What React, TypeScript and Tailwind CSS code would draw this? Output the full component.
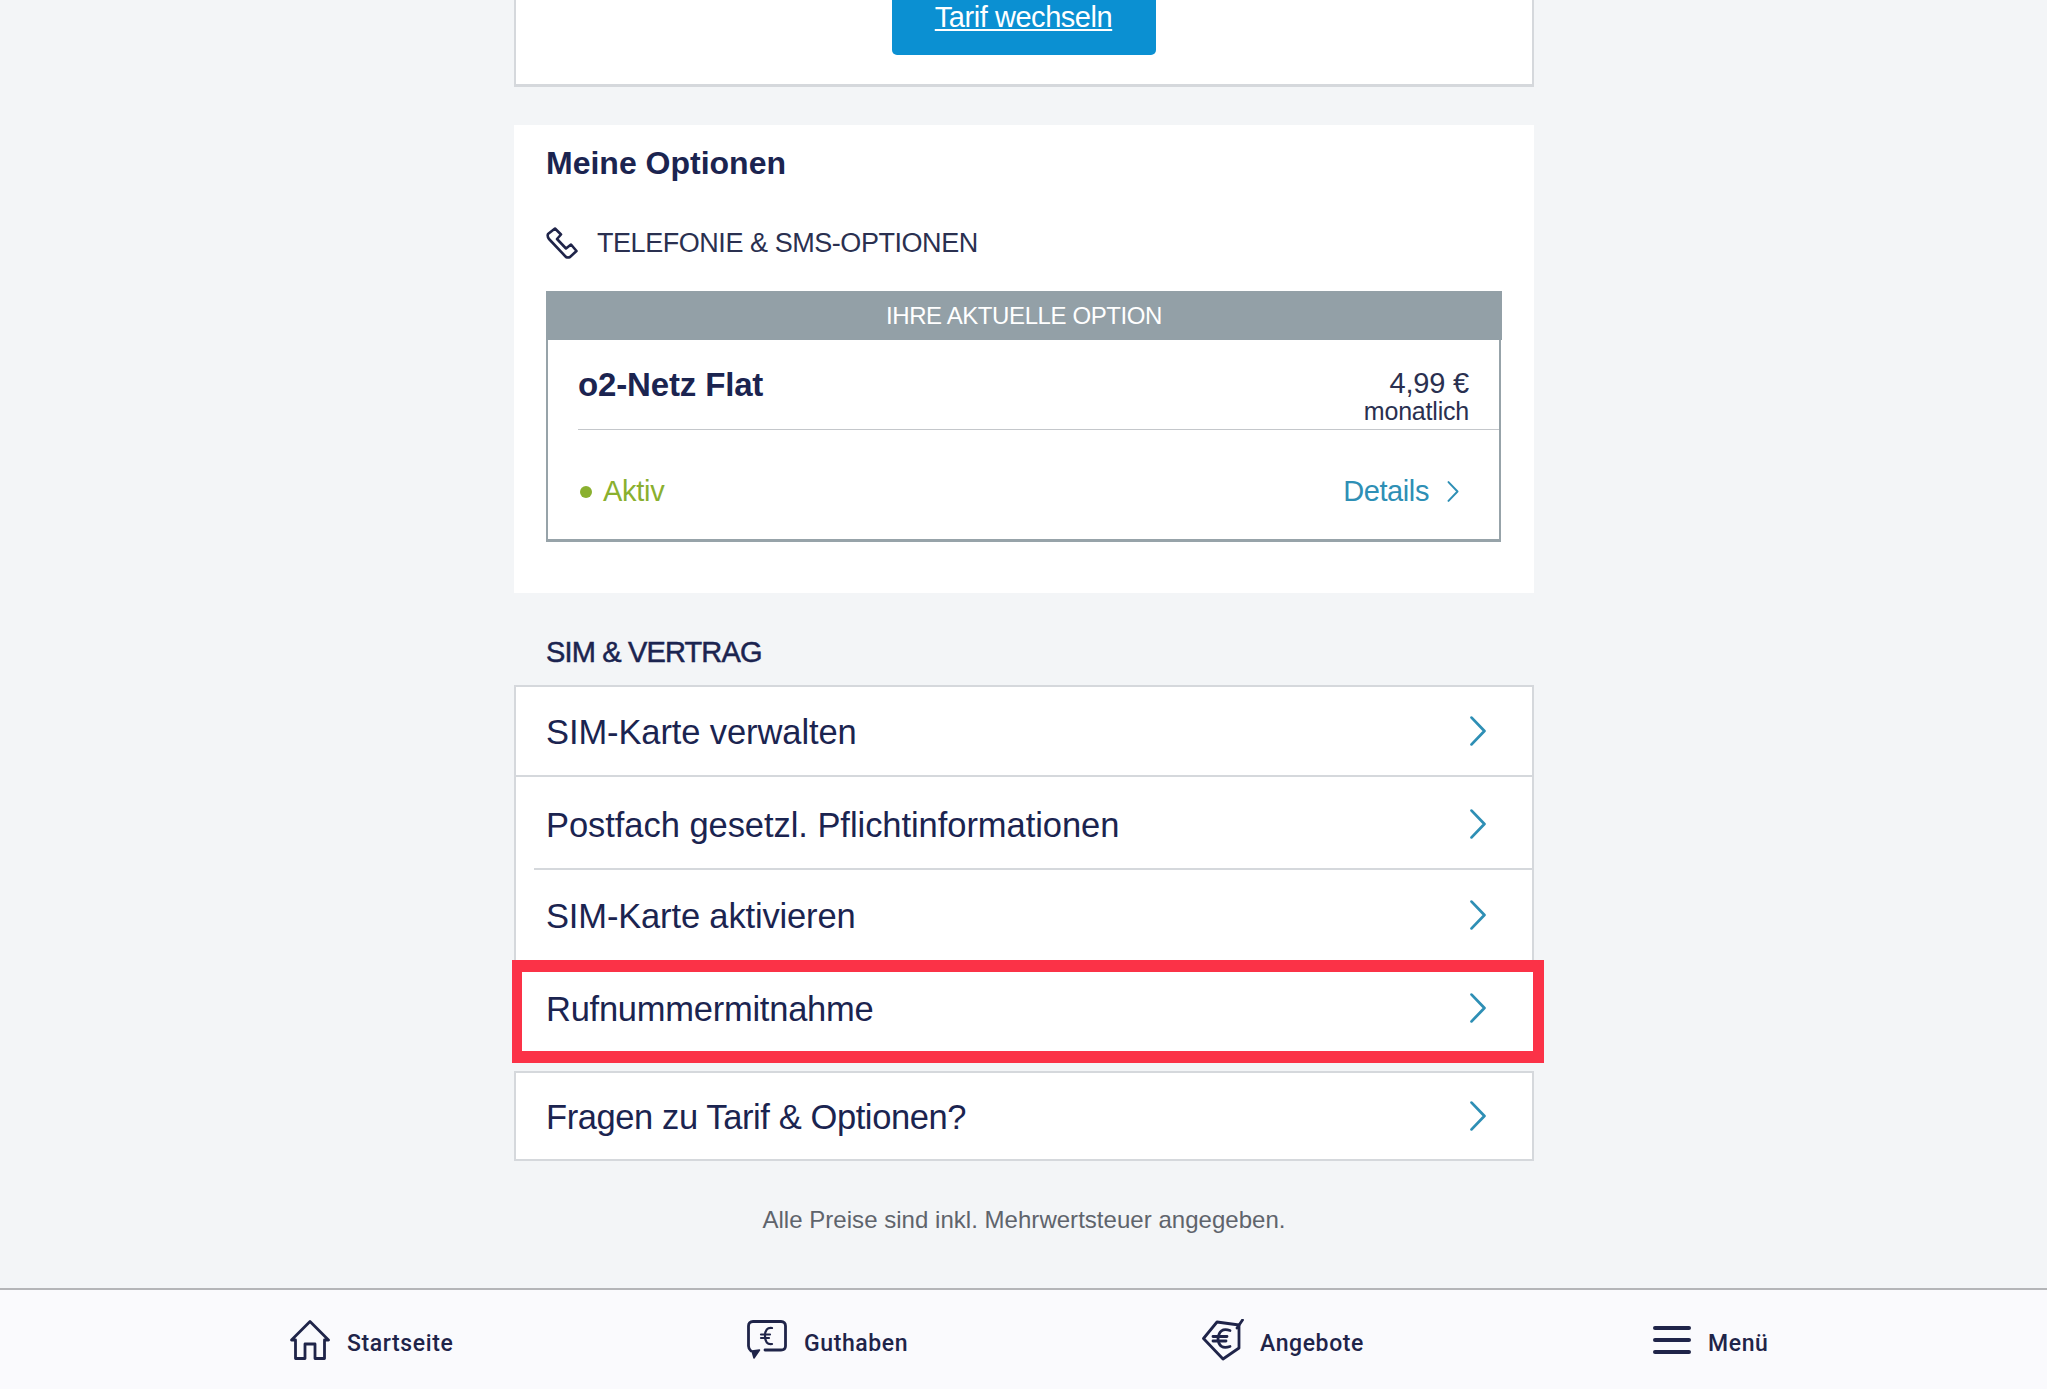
import React from "react";

const Chevron = ({ className }: { className: string }) => (
  <svg viewBox="0 0 16 28" fill="none" stroke="#2e8fb5" strokeWidth="2.6" strokeLinecap="round" strokeLinejoin="round" className={className}>
    <path d="M2 1.5 L14 14 L2 26.5" />
  </svg>
);

const RowContent = ({ label, tracking }: { label: string; tracking?: string }) => (
  <>
    <span className={`text-[34.5px] leading-none text-[#1b2450] mt-[3px] ${tracking ?? "tracking-[-0.1px]"}`}>{label}</span>
    <Chevron className="w-[18px] h-[30px]" />
  </>
);

const HomeIcon = () => (
  <svg viewBox="0 0 40 40" fill="none" stroke="#1f2449" strokeWidth="2.8" strokeLinejoin="round" className="w-[40px] h-[40px]">
    <path d="M1.5 20 L20 1.5 L38.5 20 L34.5 20 V38.5 H25 V24 H15 V38.5 H5.5 V20 Z" />
  </svg>
);
const WalletIcon = () => (
  <svg viewBox="0 0 40 40" fill="none" stroke="#1f2449" strokeWidth="2.8" strokeLinecap="round" strokeLinejoin="round" className="w-[40px] h-[40px]">
    <path d="M18 30 H34 Q38.5 30 38.5 26 V6 Q38.5 1.5 34 1.5 H6 Q1.5 1.5 1.5 6 V26 Q1.5 29 4 31" />
    <path d="M12.5 30 L7 38 L5 31 Z" fill="#1f2449" strokeWidth="1.5" />
    <path d="M25 8 Q18 7 18 16 Q18 25 25 24 M14 14.5 H23 M14 18 H22" strokeWidth="2.2" />
  </svg>
);
const TagIcon = () => (
  <svg viewBox="0 0 42 42" fill="none" stroke="#1f2449" strokeWidth="2.8" strokeLinecap="round" strokeLinejoin="round" className="w-[42px] h-[42px]">
    <path d="M37 6 L15 3 L1.5 19.5 L21 40 L37 29 Z" />
    <path d="M35 9 L40.5 1" />
    <path d="M28 11.5 Q17 8 16 20 Q17 31 28 27.5 M11 17.5 H25 M11 22 H24" strokeWidth="2.8" />
  </svg>
);
const MenuIcon = () => (
  <div className="flex flex-col gap-[8px] w-[38px]">
    <div className="h-[4px] rounded-full bg-[#1f2449]" />
    <div className="h-[4px] rounded-full bg-[#1f2449]" />
    <div className="h-[4px] rounded-full bg-[#1f2449]" />
  </div>
);
const PhoneIcon = () => (
  <svg viewBox="0 0 32 32" fill="none" stroke="#1f2449" strokeWidth="2.6" strokeLinejoin="round" className="w-[32px] h-[32px]">
    <path d="M9 1.5 L2 7 Q1 9 3 12 L20 30 Q22 31 24 30 L30.5 24 L25 17.5 L20 21.5 L11 12 L15 7.5 Z" />
  </svg>
);

const NavItem = ({ icon, label, gap }: { icon: React.ReactNode; label: string; gap: string }) => (
  <div className={`flex items-center ${gap}`}>
    {icon}
    <span className="text-[23px] font-medium text-[#1f2449] tracking-[0.6px] font-['Roboto',sans-serif] mt-[4px] translate-y-[3px]">{label}</span>
  </div>
);

export default function App() {
  return (
    <div className="relative h-[1389px] w-[2047px] overflow-hidden flex flex-col bg-[#f3f5f7] font-['Liberation_Sans',Arial,sans-serif] text-[#1b2450]">
      <main className="flex-1 flex flex-col w-[1020px] ml-[514px]">
        <section className="h-[87px] bg-white border-x-2 border-b-[3px] border-[#d5d8dc] flex justify-center">
          <div className="w-[264px] h-[55px] rounded-b-[5px] bg-[#0b90d2] flex justify-center pt-[2px] ml-[-1px]">
            <span className="text-[29px] leading-[30px] text-white underline underline-offset-2 tracking-[-0.45px]">Tarif wechseln</span>
          </div>
        </section>

        <section className="mt-[38px] h-[468px] bg-white px-[32px] pt-[20px]">
          <h2 className="text-[32px] leading-[36px] font-bold text-[#1b2450] tracking-[0px]">Meine Optionen</h2>
          <div className="mt-[44px] flex items-center gap-[19px] h-[36px]">
            <PhoneIcon />
            <span className="text-[27px] leading-none text-[#2a3050] tracking-[-0.45px]">TELEFONIE &amp; SMS-OPTIONEN</span>
          </div>
          <div className="mt-[30px] w-[956px]">
            <div className="h-[49px] bg-[#93a0a7] flex items-center justify-center text-[24px] text-white tracking-[-0.4px]">IHRE AKTUELLE OPTION</div>
            <div className="h-[202px] mr-[1px] border-x-2 border-b-[3px] border-[#97a3a9] pl-[30px]">
              <div className="h-[90px] border-b border-[#c4c7cb] flex justify-between pr-[30px]">
                <span className="text-[33px] font-bold leading-none mt-[28px] tracking-[-0.15px]">o2-Netz Flat</span>
                <div className="flex flex-col items-end mt-[27px]">
                  <span className="text-[29px] leading-[32px] text-[#2a3050] tracking-[-0.2px]">4,99 €</span>
                  <span className="text-[25px] leading-[25px] text-[#2a3050] tracking-[-0.2px]">monatlich</span>
                </div>
              </div>
              <div className="h-[108px] flex items-center justify-between pr-[40px] pt-[15px]">
                <div className="flex items-center gap-[11px] pl-[2px]">
                  <span className="w-[12px] h-[12px] rounded-full bg-[#8ab02f]" />
                  <span className="text-[29px] leading-none text-[#8ab02f] tracking-[-0.3px]">Aktiv</span>
                </div>
                <div className="flex items-center gap-[18px]">
                  <span className="text-[29px] leading-none text-[#2e8fb5] tracking-[-0.4px]">Details</span>
                  <Chevron className="w-[12px] h-[21px]" />
                </div>
              </div>
            </div>
          </div>
        </section>

        <h3 className="mt-[42px] pl-[32px] text-[29px] leading-[34px] text-[#1b2450] tracking-[-0.85px] [-webkit-text-stroke:0.5px_#1b2450]">SIM &amp; VERTRAG</h3>

        <div className="mt-[16px] bg-white border-x-2 border-t-2 border-[#d5d8dc]">
          <div className="h-[90px] flex items-center justify-between pl-[30px] pr-[45px] border-b-2 border-[#d5d8dc]">
            <RowContent label="SIM-Karte verwalten" />
          </div>
          <div className="relative h-[93px] flex items-center justify-between pl-[30px] pr-[45px]">
            <RowContent label="Postfach gesetzl. Pflichtinformationen" tracking="tracking-[-0.05px]" />
            <div className="absolute left-[18px] right-0 bottom-0 h-[2px] bg-[#d5d8dc]" />
          </div>
          <div className="h-[90px] flex items-center justify-between pl-[30px] pr-[45px]">
            <RowContent label="SIM-Karte aktivieren" tracking="tracking-[-0.15px]" />
          </div>
        </div>

        <div className="relative h-[103px] bg-white">
          <div className="h-[103px] flex items-center justify-between pl-[32px] pr-[47px] pb-[8px]">
            <RowContent label="Rufnummermitnahme" tracking="tracking-[-0.25px]" />
          </div>
          <div className="absolute left-[-2px] right-[-10px] top-0 bottom-0 border-[#fb3247] border-t-[12px] border-b-[12px] border-l-[10px] border-r-[11px]" />
        </div>

        <div className="mt-[8px] h-[90px] bg-white border-2 border-[#d5d8dc] flex items-center justify-between pl-[30px] pr-[45px]">
          <RowContent label="Fragen zu Tarif &amp; Optionen?" tracking="tracking-[-0.4px]" />
        </div>

        <p className="mt-[44px] text-center text-[24px] leading-[30px] text-[#5f646c] tracking-[0.03px]">Alle Preise sind inkl. Mehrwertsteuer angegeben.</p>
      </main>

      <nav className="h-[101px] shrink-0 bg-[#fafafd] border-t-2 border-[#b4b5b8] flex items-center pl-[290px]">
        <div className="w-[457px]"><NavItem icon={<HomeIcon />} label="Startseite" gap="gap-[17px]" /></div>
        <div className="w-[455px]"><NavItem icon={<WalletIcon />} label="Guthaben" gap="gap-[17px]" /></div>
        <div className="w-[451px]"><NavItem icon={<TagIcon />} label="Angebote" gap="gap-[16px]" /></div>
        <NavItem icon={<MenuIcon />} label="Menü" gap="gap-[17px]" />
      </nav>
    </div>
  );
}
